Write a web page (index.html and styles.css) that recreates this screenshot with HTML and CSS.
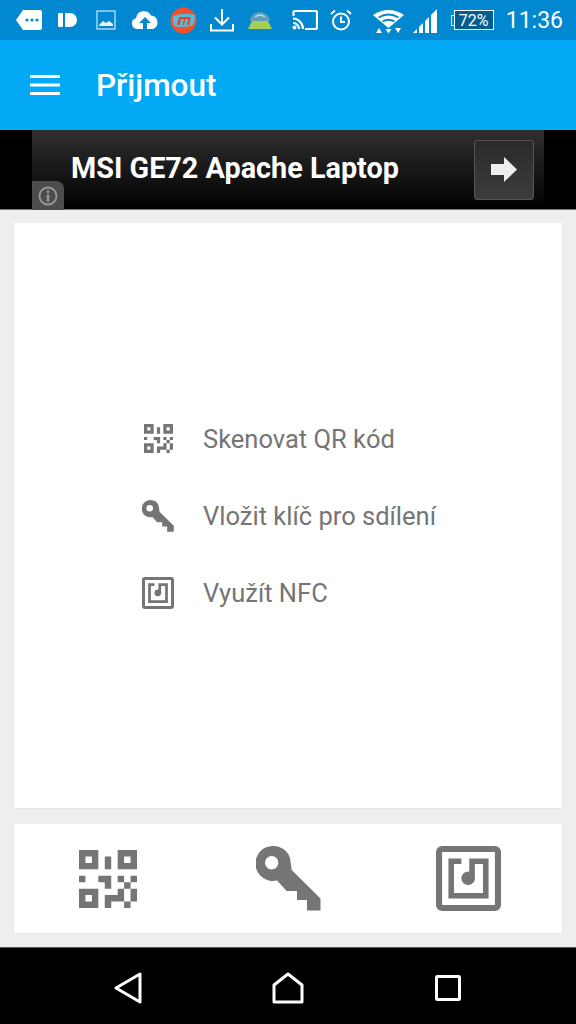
FILE: index.html
```html
<!DOCTYPE html>
<html lang="cs">
  <head>
    <meta charset="UTF-8" />
    <title>Přijmout</title>
    <link rel="stylesheet" href="styles.css">
  </head>
  <body>
    <svg class="defs" width="0" height="0">
      <symbol id="ico-qr" viewBox="0 0 18 18">
        <path fill-rule="evenodd" d="M0 0H6V6H0ZM2 2V4H4V2ZM12 0H18V6H12ZM14 2V4H16V2ZM0 12H6V18H0ZM2 14V16H4V14Z"/>
        <path d="M8 2H10V6H8ZM0 8H2V10H0ZM6 8H10V12H8V10H6ZM12 8H14V10H12ZM16 8H18V10H16ZM14 10H16V12H14ZM12 12H14V16H10V18H8V14H12ZM16 12H18V16H16ZM14 16H16V18H14Z"/>
      </symbol>
      <symbol id="ico-key" viewBox="0 0 65 65">
        <path fill-rule="evenodd" d="M17.500 0A17.500 17.500 0 0 1 34 12L35.700 24L64.500 52.500V64.500H51V54H41V45H30.700L21 34.500A17.500 17.500 0 1 1 17.500 0ZM15.700 10A6.700 6.700 0 1 0 15.700 23.400A6.700 6.700 0 1 0 15.700 10Z"/>
      </symbol>
      <symbol id="ico-nfc" viewBox="0 0 64 64">
        <rect x="3" y="3" width="58" height="58" rx="3" fill="none" stroke="currentColor" stroke-width="6"/>
        <path d="M25 15H15V49H49V15H35.500V30" fill="none" stroke="currentColor" stroke-width="5.500"/>
        <circle cx="31.700" cy="31.700" r="6.700"/>
      </symbol>
    </svg>

    <div class="status-bar">
      <div class="status-left">
        <span class="tile"><svg width="28" height="22" viewBox="0 0 28 22"><path d="M8 1H25Q27 1 27 3V19Q27 21 25 21H8L1 11Z" fill="#fff"/><circle cx="12" cy="11" r="1.600" fill="#0288d1"/><circle cx="17" cy="11" r="1.600" fill="#0288d1"/><circle cx="22" cy="11" r="1.600" fill="#0288d1"/></svg></span>
        <span class="tile"><svg width="20" height="16" viewBox="0 0 20 16"><path d="M0 2Q0 1 1 1H4Q5 1 5 2V14Q5 15 4 15H1Q0 15 0 14ZM7 1H12A7 7 0 0 1 12 15H7Z" fill="#fff"/></svg></span>
        <span class="tile"><svg width="20" height="20" viewBox="0 0 20 20"><rect x="1" y="1" width="18" height="18" fill="none" stroke="#cfe8f6" stroke-width="1.200"/><path d="M3 15L7 11L10 13L13 11L17 14V16H3Z" fill="#e4f2fa"/></svg></span>
        <span class="tile"><svg width="28" height="20" viewBox="0 0 28 20"><path fill-rule="evenodd" d="M6 19A5.500 5.500 0 0 1 5 8.200A8 8 0 0 1 20 5.500A7 7 0 0 1 22 19ZM14 7L8 13H12V19H16V13H20Z" fill="#fff"/></svg></span>
        <span class="tile"><svg width="27" height="27" viewBox="0 0 27 27"><circle cx="13.500" cy="13.500" r="13" fill="#f0512c"/><path d="M3 9Q14 5 25 8Q25 18 21 19Q10 21 4 19Q2 14 3 9Z" fill="#5cb8d8"/><path d="M7 18L9 10H19Q21 10 20.500 12L19 18H17L18.500 12H15.500L14 18H12.500L14 12H11L9.500 18Z" fill="#d9452a"/></svg></span>
        <span class="tile"><svg width="24" height="23" viewBox="0 0 24 23"><path d="M12 0V15M5 8.500L12 15.500L19 8.500M1 15V21.500H23V15" fill="none" stroke="#fff" stroke-width="2"/></svg></span>
        <span class="tile"><svg width="26" height="19" viewBox="0 0 26 19"><path d="M3 10A10 9 0 0 1 23 10Z" fill="#5f9dbb"/><path d="M1 18L5 10H21L25 18Z" fill="#a6cf55"/><path d="M8 6Q13 2 18 6" fill="none" stroke="#bcd9e6" stroke-width="1.500"/></svg></span>
      </div>
      <div class="status-right">
        <svg class="st-cast" width="26" height="20" viewBox="0 0 26 20"><path d="M1.500 6V2.500Q1.500 1 3 1H23.500Q25 1 25 2.500V17.500Q25 19 23.500 19H13" fill="none" stroke="#fff" stroke-width="2.200"/><path d="M1 8.500A10.500 10.500 0 0 1 11 19M1 13A6 6 0 0 1 7 19" fill="none" stroke="#fff" stroke-width="2.200"/><circle cx="2.500" cy="17.500" r="2" fill="#fff"/></svg>
        <svg class="st-alarm" width="22" height="22" viewBox="0 0 22 22"><circle cx="11" cy="12.500" r="8" fill="none" stroke="#fff" stroke-width="2"/><path d="M11 7.500V13H15M1 5L5 1.500M21 5L17 1.500" fill="none" stroke="#fff" stroke-width="2"/></svg>
        <svg class="st-wifi" width="31" height="25" viewBox="0 0 31 25"><path d="M15.500 19L0 6Q15.500 -4 31 6Z" fill="#fff"/><path d="M5.500 8.500Q15.500 2.500 25.500 8.500M9.500 12.500Q15.500 9 21.500 12.500" fill="none" stroke="#0288d1" stroke-width="1.800"/><path d="M3 24L6 19L9 24ZM12.500 20H18.500L15.500 24.500ZM22 19H28L25 24Z" fill="#fff"/></svg>
        <svg class="st-signal" width="24" height="24" viewBox="0 0 24 24"><path d="M0 24L4 20V24ZM6 24V18L10 14V24ZM12 24V12L16 8V24ZM18 24V6L24 0V24Z" fill="#fff"/></svg>
        <div class="battery"><span class="battery-level">72%</span></div>
        <span class="clock">11:36</span>
      </div>
    </div>

    <header class="toolbar">
      <svg class="menu-icon" width="30" height="20" viewBox="0 0 30 20"><path d="M0 1.500H30M0 10H30M0 18.500H30" stroke="#fff" stroke-width="3"/></svg>
      <h1 class="toolbar-title">Přijmout</h1>
    </header>

    <div class="ad">
      <div class="ad-inner">
        <span class="ad-text">MSI GE72 Apache Laptop</span>
        <div class="ad-button">
          <svg width="26" height="25" viewBox="0 0 26 25"><path d="M0 7H13V0L26 12.500L13 25V18H0Z" fill="#eee"/></svg>
        </div>
        <div class="ad-info">
          <svg width="20" height="20" viewBox="0 0 20 20"><circle cx="10" cy="10" r="8.500" fill="none" stroke="#999" stroke-width="1.800"/><path d="M8.700 4.500H11.300V7H8.700ZM8.700 8.500H11.300V15.500H8.700Z" fill="#999"/></svg>
        </div>
      </div>
    </div>

    <main class="content">
      <section class="card card-main">
        <ul class="options">
          <li class="option">
            <span class="option-icon"><svg class="small-qr"><use href="#ico-qr"/></svg></span>
            Skenovat QR kód
          </li>
          <li class="option">
            <span class="option-icon"><svg class="small-key"><use href="#ico-key"/></svg></span>
            Vložit klíč pro sdílení
          </li>
          <li class="option">
            <span class="option-icon"><svg class="small-key"><use href="#ico-nfc"/></svg></span>
            Využít NFC
          </li>
        </ul>
      </section>
      <section class="card card-actions">
        <span class="action"><svg class="big-qr"><use href="#ico-qr"/></svg></span>
        <span class="action"><svg class="big-icon"><use href="#ico-key"/></svg></span>
        <span class="action"><svg class="big-icon"><use href="#ico-nfc"/></svg></span>
      </section>
    </main>

    <nav class="nav-bar">
      <span class="nav-item"><svg width="28" height="32" viewBox="0 0 28 32"><path d="M26 2V30L2 16Z" fill="none" stroke="#fff" stroke-width="3" stroke-linejoin="round"/></svg></span>
      <span class="nav-item"><svg width="32" height="32" viewBox="0 0 32 32"><path d="M2 30V13L16 2L30 13V30Z" fill="none" stroke="#fff" stroke-width="3" stroke-linejoin="round"/></svg></span>
      <span class="nav-item"><svg width="26" height="26" viewBox="0 0 26 26"><rect x="1.500" y="1.500" width="23" height="23" rx="1" fill="none" stroke="#fff" stroke-width="3"/></svg></span>
    </nav>
  </body>
</html>
```

FILE: styles.css
```css
html, body {
  margin: 0;
  padding: 0;
}

body {
  width: 576px;
  height: 1024px;
  display: flex;
  flex-direction: column;
  overflow: hidden;
  background-color: #eeeeee;
  font-family: Roboto, "Noto Sans", sans-serif;
}

.defs {
  position: absolute;
}

/* Barra de estado */
.status-bar {
  height: 40px;
  flex: none;
  display: flex;
  align-items: center;
  padding-left: 10px;
  background-color: #0288d1;
}

.status-left {
  display: flex;
  align-items: center;
}

.tile {
  width: 38.5px;
  display: flex;
  justify-content: center;
}

.status-right {
  margin-left: auto;
  display: flex;
  align-items: center;
  padding-right: 13px;
}

.st-alarm {
  margin-left: 12px;
}

.st-wifi {
  margin-left: 21px;
  margin-top: 3px;
}

.st-signal {
  margin-left: 9px;
  margin-top: 2px;
}

.battery {
  position: relative;
  margin-left: 17px;
  width: 38px;
  height: 18px;
  display: flex;
  align-items: center;
  justify-content: center;
  border: 1px solid #fff;
  background-color: #025e92;
  color: #fff;
  font-size: 16px;
}

/* Polo de la bateria */
.battery::before {
  content: "";
  position: absolute;
  left: -4px;
  top: 4px;
  width: 2px;
  height: 9px;
  border: 1px solid #cfe8f6;
  border-right: none;
}

.clock {
  margin-left: 12px;
  color: #fff;
  font-size: 23px;
}

/* Barra superior */
.toolbar {
  height: 90px;
  flex: none;
  display: flex;
  align-items: center;
  padding-left: 30px;
  background-color: #03a9f4;
}

.menu-icon {
  margin-right: 36px;
}

.toolbar-title {
  margin: 0;
  color: #fff;
  font-size: 31.5px;
  font-weight: 500;
}

/* Anuncio */
.ad {
  height: 79px;
  flex: none;
  padding: 0 32px;
  background-color: #000;
  border-bottom: 1px solid #777;
}

.ad-inner {
  position: relative;
  height: 100%;
  display: flex;
  align-items: center;
  justify-content: space-between;
  padding: 0 10px 0 39px;
  background: linear-gradient(#303030, #000000);
}

.ad-text {
  margin-top: -3px;
  color: #fff;
  font-size: 28.8px;
  font-weight: 700;
}

.ad-button {
  width: 58px;
  height: 58px;
  display: flex;
  align-items: center;
  justify-content: center;
  border: 1px solid #555;
  border-radius: 3px;
  background: linear-gradient(#2b2b2b, #3c3c3c);
}

.ad-info {
  position: absolute;
  left: 0;
  bottom: -1px;
  width: 32px;
  height: 29px;
  display: flex;
  align-items: center;
  justify-content: center;
  border-top-right-radius: 8px;
  background-color: #4d4d4d;
}

/* Contenido */
.content {
  flex: 1;
  min-height: 0;
  display: flex;
  flex-direction: column;
  gap: 14px;
  padding: 12px 13px 13px;
}

.card {
  background-color: #fff;
  border: 1px solid #e6e6e6;
  border-top-color: #ececec;
  color: #757575;
  fill: #757575;
}

.card-main {
  height: 587px;
  box-sizing: border-box;
  flex: none;
  display: flex;
  align-items: center;
  justify-content: center;
}

.options {
  margin: 0;
  padding: 0 0 0 2px;
  list-style: none;
  display: flex;
  flex-direction: column;
  gap: 45px;
}

.option {
  height: 32px;
  display: flex;
  align-items: center;
  font-size: 25.5px;
}

.option-icon {
  width: 32px;
  margin-right: 29px;
  display: flex;
  justify-content: center;
}

.small-qr {
  width: 29px;
  height: 29px;
}

.small-key {
  width: 32px;
  height: 32px;
}

.card-actions {
  height: 111px;
  box-sizing: border-box;
  flex: none;
  display: grid;
  grid-template-columns: repeat(3, 180px);
  justify-content: center;
  align-items: center;
}

.action {
  display: flex;
  justify-content: center;
}

.big-qr {
  width: 58px;
  height: 58px;
}

.big-icon {
  width: 65px;
  height: 65px;
}

/* Barra de navegacion */
.nav-bar {
  height: 77px;
  flex: none;
  display: grid;
  grid-template-columns: repeat(3, 160px);
  justify-content: center;
  align-items: center;
  padding-top: 4px;
  box-sizing: border-box;
  background-color: #000;
  border-top: 1px solid #555;
}

.nav-item {
  display: flex;
  justify-content: center;
}
```
